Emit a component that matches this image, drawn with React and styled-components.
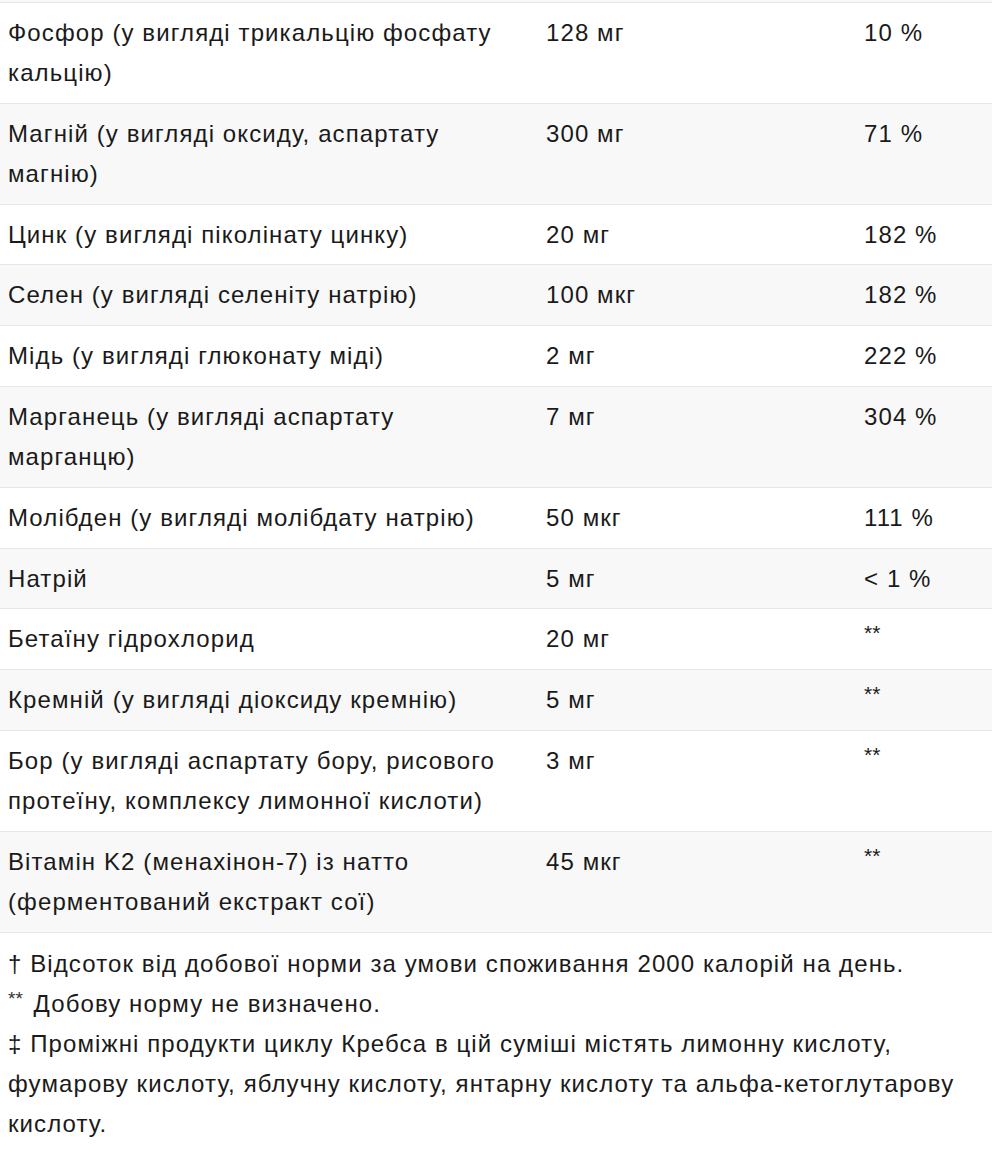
import styled, { createGlobalStyle } from "styled-components";

const GlobalStyle = createGlobalStyle`
  html, body {
    margin: 0;
    padding: 0;
    background: #ffffff;
  }
  body {
    font-family: "Liberation Sans", Arial, sans-serif;
    color: #1a1a1a;
  }
`;

const rows = [
  ["Фосфор (у вигляді трикальцію фосфату кальцію)", "128 мг", "10 %"],
  ["Магній (у вигляді оксиду, аспартату магнію)", "300 мг", "71 %"],
  ["Цинк (у вигляді піколінату цинку)", "20 мг", "182 %"],
  ["Селен (у вигляді селеніту натрію)", "100 мкг", "182 %"],
  ["Мідь (у вигляді глюконату міді)", "2 мг", "222 %"],
  ["Марганець (у вигляді аспартату марганцю)", "7 мг", "304 %"],
  ["Молібден (у вигляді молібдату натрію)", "50 мкг", "111 %"],
  ["Натрій", "5 мг", "< 1 %"],
  ["Бетаїну гідрохлорид", "20 мг", null],
  ["Кремній (у вигляді діоксиду кремнію)", "5 мг", null],
  ["Бор (у вигляді аспартату бору, рисового протеїну, комплексу лимонної кислоти)", "3 мг", null],
  ["Вітамін K2 (менахінон-7) із натто (ферментований екстракт сої)", "45 мкг", null],
];

const Page = styled.div`
  width: 992px;
`;

const TopEdge = styled.div`
  height: 2px;
  background: #f8f8f8;
`;

const Table = styled.table`
  width: 100%;
  border-collapse: collapse;
  table-layout: fixed;
  font-size: 24px;
  line-height: 40px;
  letter-spacing: 1.1px;
`;

const Row = styled.tr`
  background: ${(p) => (p.$shaded ? "#f8f8f8" : "#ffffff")};
  border-top: 1px solid #e6e6e6;
  border-bottom: 1px solid #e6e6e6;
`;

const Cell = styled.td`
  padding: 10px 16px 9.8px 8px;
  vertical-align: top;
`;

const Stars = styled.span`
  font-size: 21px;
  line-height: 1;
  vertical-align: 7px;
  letter-spacing: 0;
`;

const NoteStars = styled(Stars)`
  font-size: 19px;
  margin-right: 3px;
  color: #333;
`;

const Notes = styled.div`
  padding: 11px 8px 0;
  font-size: 24px;
  line-height: 40px;
  letter-spacing: 1.1px;
`;

const Note = styled.p`
  margin: 0;
`;

const App = () => {
  return (
    <Page>
      <GlobalStyle />
      <TopEdge />
      <Table>
        <colgroup>
          <col style={{ width: "538px" }} />
          <col style={{ width: "318px" }} />
          <col />
        </colgroup>
        <tbody>
          {rows.map(([name, amount, pct], i) => (
            <Row key={name} $shaded={i % 2 === 1}>
              <Cell>{name}</Cell>
              <Cell>{amount}</Cell>
              <Cell>{pct ? pct : <Stars>**</Stars>}</Cell>
            </Row>
          ))}
        </tbody>
      </Table>
      <Notes>
        <Note>† Відсоток від добової норми за умови споживання 2000 калорій на день.</Note>
        <Note>
          <NoteStars>**</NoteStars> Добову норму не визначено.
        </Note>
        <Note>
          ‡ Проміжні продукти циклу Кребса в цій суміші містять лимонну кислоту,
          фумарову кислоту, яблучну кислоту, янтарну кислоту та альфа-кетоглутарову
          кислоту.
        </Note>
      </Notes>
    </Page>
  );
};

export default App;
